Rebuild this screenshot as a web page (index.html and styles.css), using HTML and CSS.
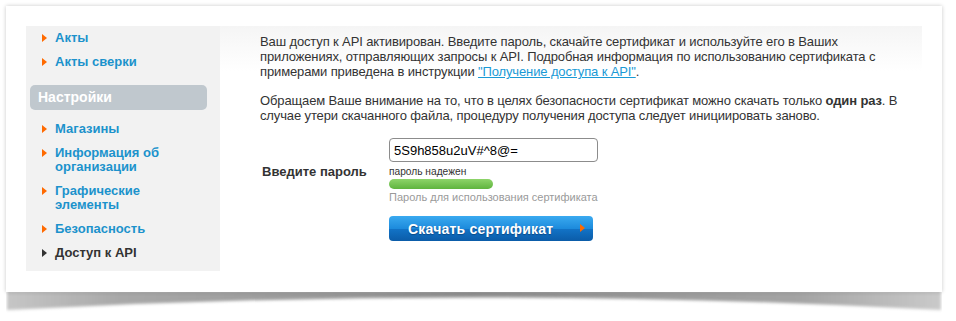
FILE: index.html
```html
<!DOCTYPE html>
<html lang="ru">
<head>
    <meta charset="UTF-8">
    <title>Доступ к API</title>
    <link rel="stylesheet" href="styles.css">
</head>
<body>
    <div class="frame">
        <div class="card">
            <aside class="sidebar">
                <ul class="menu">
                    <li><a href="#">Акты</a></li>
                    <li><a href="#">Акты сверки</a></li>
                </ul>
                <div class="menu-title">Настройки</div>
                <ul class="menu">
                    <li><a href="#">Магазины</a></li>
                    <li><a href="#">Информация об организации</a></li>
                    <li><a href="#">Графические элементы</a></li>
                    <li><a href="#">Безопасность</a></li>
                    <li class="active"><a href="#">Доступ к API</a></li>
                </ul>
            </aside>

            <main class="content">
                <p>Ваш доступ к API активирован. Введите пароль, скачайте сертификат и используйте его в Ваших приложениях, отправляющих запросы к API. Подробная информация по использованию сертификата с примерами приведена в инструкции <a href="#">"Получение доступа к API"</a>.</p>
                <p>Обращаем Ваше внимание на то, что в целях безопасности сертификат можно скачать только <b>один раз</b>. В случае утери скачанного файла, процедуру получения доступа следует инициировать заново.</p>

                <form class="cert-form" onsubmit="return false">
                    <label class="field-label" for="pass">Введите пароль</label>
                    <div class="field">
                        <input class="input" id="pass" type="text" value="5S9h858u2uV#^8@=">
                        <div class="strength-text">пароль надежен</div>
                        <div class="strength-bar"></div>
                        <div class="hint">Пароль для использования сертификата</div>
                    </div>
                    <div></div>
                    <button class="btn" type="submit">Скачать сертификат</button>
                </form>
            </main>
        </div>

        <!-- curled paper shadow under the card -->
        <svg class="curl" width="936" height="26" viewBox="0 0 936 26">
            <defs>
                <linearGradient id="shade" x1="0" y1="0" x2="1" y2="0">
                    <stop offset="0" stop-color="#c6c6c6"/>
                    <stop offset="0.12" stop-color="#a8a8a8"/>
                    <stop offset="0.5" stop-color="#8e8e8e"/>
                    <stop offset="0.85" stop-color="#a4a4a4"/>
                    <stop offset="1" stop-color="#cacaca"/>
                </linearGradient>
                <filter id="soft" x="-5%" y="-50%" width="110%" height="200%">
                    <feGaussianBlur stdDeviation="1.4"/>
                </filter>
            </defs>
            <path d="M1,0 L935,0 L935,19 Q468,-6 1,19 Z" fill="url(#shade)" filter="url(#soft)"/>
        </svg>
    </div>
</body>
</html>
```

FILE: styles.css
```css
* {
    margin: 0;
    padding: 0;
    box-sizing: border-box;
}

body {
    font-family: "Liberation Sans", Arial, sans-serif;
    font-size: 13px;
    color: #333;
    background: #fff;
    padding: 6px 14px 0 6px;
}

.frame {
    width: 936px;
}

.card {
    display: flex;
    align-items: flex-start;
    padding: 20px 20px 21px;
    background: #fff;
    box-shadow: 0 0 4px rgba(0, 0, 0, 0.22);
    position: relative;
    z-index: 1;
}

.curl {
    display: block;
    margin-top: -1px;
}

/* sidebar */

.sidebar {
    width: 194px;
    background: #f2f2f2;
    padding: 5px 0 11px;
}

.menu {
    list-style: none;
}

.menu li + li {
    margin-top: 10px;
}

.menu a {
    display: block;
    position: relative;
    padding-left: 29px;
    padding-right: 26px;
    line-height: 14px;
    font-weight: bold;
    color: #1c92cc;
    text-decoration: none;
}

.menu a:before {
    content: "";
    position: absolute;
    left: 16px;
    top: 3px;
    width: 0;
    height: 0;
    border-left: 5px solid #ff6a00;
    border-top: 4px solid transparent;
    border-bottom: 4px solid transparent;
}

.menu .active a {
    color: #333;
}

.menu .active a:before {
    border-left-color: #333;
}

.menu-title {
    margin: 16px 13px 12px 4px;
    height: 25px;
    line-height: 25px;
    padding-left: 8px;
    background: #c0c8ce;
    border-radius: 5px;
    color: #fff;
    font-size: 14px;
    font-weight: bold;
}

/* main content */

.content {
    flex: 1;
    padding: 8px 20px 0 40px;
    background: linear-gradient(#f5f5f5, #fff 45px);
}

.content p {
    line-height: 15px;
    margin-bottom: 14px;
    letter-spacing: -0.13px;
}

.content p a {
    color: #1a9ad6;
}

.cert-form {
    display: grid;
    grid-template-columns: 129px 1fr;
    align-items: center;
    padding-top: 1px;
}

.field-label {
    font-weight: bold;
    padding-left: 2px;
}

.input {
    display: block;
    width: 209px;
    height: 24px;
    padding: 0 4px;
    border: 1px solid #8c8c8c;
    border-radius: 4px;
    font-family: "Liberation Sans", Arial, sans-serif;
    font-size: 13px;
    color: #000;
}

.strength-text {
    font-size: 10.2px;
    line-height: 13px;
    margin-top: 3px;
}

.strength-bar {
    width: 104px;
    height: 10px;
    margin-top: 1px;
    border-radius: 5px;
    background: linear-gradient(#8ed46a, #5fb43e);
}

.hint {
    font-size: 11px;
    line-height: 14px;
    margin-top: 1px;
    color: #9a9a9a;
}

.btn {
    justify-self: start;
    position: relative;
    width: 204px;
    height: 25px;
    margin-top: 12px;
    padding-left: 19px;
    text-align: left;
    border: none;
    border-radius: 4px;
    background: linear-gradient(#3aaaf0 0%, #1d8bdc 50%, #1273c6 52%, #0b5ca8 100%);
    color: #fff;
    font-family: "Liberation Sans", Arial, sans-serif;
    font-size: 14px;
    font-weight: bold;
    letter-spacing: 0.2px;
    text-shadow: 0 1px 1px #0a4a88;
    cursor: pointer;
}

.btn:after {
    content: "";
    position: absolute;
    right: 8px;
    top: 8px;
    border-left: 5px solid #ff6a00;
    border-top: 4px solid transparent;
    border-bottom: 4px solid transparent;
}
```
